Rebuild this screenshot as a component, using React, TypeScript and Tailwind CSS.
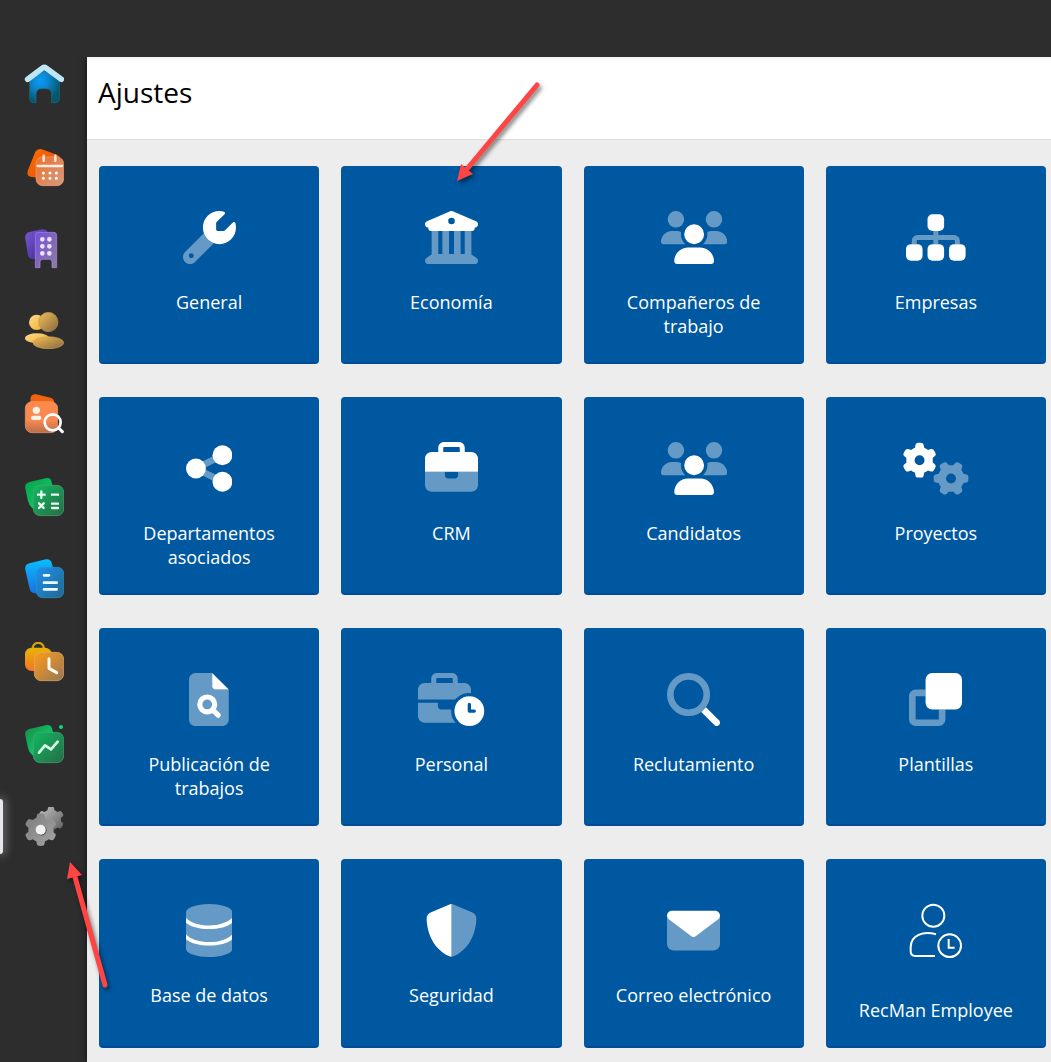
import type { ReactNode } from "react";

const GEAR =
  "M308.5 135.3c7.1-6.3 9.9-16.2 6.2-25c-2.3-5.3-4.8-10.5-7.6-15.5L304 89.4c-3-5-6.3-9.9-9.8-14.6c-5.7-7.6-15.7-10.1-24.7-7.1l-28.2 9.3c-10.7-8.8-23-16-36.2-20.9L199 27.1c-1.9-9.3-9.1-16.7-18.5-17.8C173.9 8.4 167.2 8 160.4 8h-.7c-6.8 0-13.5 .4-20.1 1.2c-9.4 1.1-16.6 8.6-18.5 17.8L115 56.1c-13.3 5-25.5 12.1-36.2 20.9L50.5 67.8c-9-3-19-.5-24.7 7.1c-3.5 4.7-6.8 9.6-9.9 14.6l-3 5.3c-2.8 5-5.3 10.2-7.6 15.6c-3.7 8.7-.9 18.6 6.2 25l22.2 19.8C32.6 161.9 32 168.9 32 176s.6 14.1 1.7 20.9L11.5 216.7c-7.1 6.3-9.9 16.2-6.2 25c2.3 5.3 4.8 10.5 7.6 15.6l3 5.2c3 5.1 6.3 9.9 9.9 14.6c5.7 7.6 15.7 10.1 24.7 7.1l28.2-9.3c10.7 8.8 23 16 36.2 20.9l6.1 29.1c1.9 9.3 9.1 16.7 18.5 17.8c6.7 .8 13.5 1.2 20.4 1.2s13.7-.4 20.4-1.2c9.4-1.1 16.6-8.6 18.5-17.8l6.1-29.1c13.3-5 25.5-12.1 36.2-20.9l28.2 9.3c9 3 19 .5 24.7-7.1c3.5-4.7 6.8-9.5 9.8-14.6l3.1-5.4c2.8-5 5.3-10.2 7.6-15.5c3.7-8.7 .9-18.6-6.2-25l-22.2-19.8c1.1-6.8 1.7-13.8 1.7-20.9s-.6-14.1-1.7-20.9l22.2-19.8z";
const GEAR_HOLE = "M112 176a48 48 0 1 1 96 0 48 48 0 1 1 -96 0z";

/* Two-tone icon, 53px high */
function Duo({ width = 512, children }: { width?: number; children: ReactNode }) {
  return (
    <svg viewBox={`0 0 ${width} 512`} className="h-[53px] w-auto" fill="white" aria-hidden="true">
      {children}
    </svg>
  );
}

const usersIcon = (
  <Duo width={640}>
    <path
      opacity=".4"
      d="M144 0a80 80 0 1 1 0 160A80 80 0 1 1 144 0zM512 0a80 80 0 1 1 0 160A80 80 0 1 1 512 0zM0 298.7C0 239.8 47.8 192 106.7 192h42.7c15.9 0 31 3.5 44.6 9.7c-1.3 7.2-1.9 14.7-1.9 22.3c0 38.2 16.8 72.5 43.3 96H21.3C9.6 320 0 310.4 0 298.7zM405.3 320c26.6-23.5 43.3-57.8 43.3-96c0-7.6-.7-15-1.9-22.3c13.6-6.3 28.7-9.7 44.6-9.7h42.7C592.2 192 640 239.8 640 298.7c0 11.8-9.6 21.3-21.3 21.3H405.3z"
    />
    <path d="M224 224a96 96 0 1 1 192 0 96 96 0 1 1 -192 0zM128 485.3C128 411.7 187.7 352 261.3 352H378.7C452.3 352 512 411.7 512 485.3c0 14.7-11.9 26.7-26.7 26.7H154.7c-14.7 0-26.7-11.9-26.7-26.7z" />
  </Duo>
);

const tiles: { label: string; icon: ReactNode }[] = [
  {
    label: "General",
    icon: (
      <Duo>
        <path
          opacity=".4"
          fillRule="evenodd"
          d="M201.5 214.5L19.9 396.1C7.2 408.8 0 426.1 0 444.1C0 481.6 30.4 512 67.9 512c18 0 35.3-7.2 48-19.9L297.5 310.5A160 160 0 0 1 201.5 214.5zM80 408a24 24 0 1 1 0 48 24 24 0 1 1 0-48z"
        />
        <path d="M352 320c88.4 0 160-71.6 160-160c0-15.3-2.2-30.1-6.2-44.2c-3.1-10.8-16.4-13.2-24.3-5.3l-76.8 76.8c-3 3-7.1 4.7-11.3 4.7H336c-8.8 0-16-7.2-16-16V118.6c0-4.2 1.7-8.3 4.7-11.3l76.8-76.8c7.9-7.9 5.4-21.2-5.3-24.3C382.1 2.2 367.3 0 352 0C263.6 0 192 71.6 192 160s71.6 160 160 160z" />
      </Duo>
    ),
  },
  {
    label: "Economía",
    icon: (
      <Duo>
        <path
          opacity=".4"
          d="M128 192H64V420.3c-.6.3-1.2.7-1.8 1.1l-48 32c-11.7 7.8-17 22.4-12.9 35.9S17.9 512 32 512H480c14.1 0 26.5-9.2 30.6-22.7s-1.1-28.1-12.9-35.9l-48-32c-.6-.4-1.2-.7-1.8-1.1V192H384V416H344V192H280V416H232V192H168V416H128V192z"
        />
        <path
          fillRule="evenodd"
          d="M243.4 2.6l-224 96c-14 6-21.8 21-18.7 35.8S16.8 160 32 160v8c0 13.3 10.7 24 24 24H456c13.3 0 24-10.7 24-24v-8c15.2 0 28.3-10.7 31.3-25.6s-4.8-29.9-18.7-35.8l-224-96c-8-3.4-17.2-3.4-25.2 0zM256 64a32 32 0 1 1 0 64 32 32 0 1 1 0-64z"
        />
      </Duo>
    ),
  },
  { label: "Compañeros de trabajo", icon: usersIcon },
  {
    label: "Empresas",
    icon: (
      <Duo width={576}>
        <path
          opacity=".4"
          fill="none"
          stroke="white"
          strokeWidth="48"
          d="M80 320v-32c0-18 14-32 32-32H464c18 0 32 14 32 32v32M288 192v40M288 280v40"
        />
        <rect x="208" y="32" width="160" height="160" rx="48" />
        <rect x="0" y="320" width="160" height="160" rx="48" />
        <rect x="208" y="320" width="160" height="160" rx="48" />
        <rect x="416" y="320" width="160" height="160" rx="48" />
      </Duo>
    ),
  },
  {
    label: "Departamentos asociados",
    icon: (
      <Duo width={448}>
        <path opacity=".4" fill="none" stroke="white" strokeWidth="64" d="M352 128L96 256l256 128" />
        <circle cx="96" cy="256" r="96" />
        <circle cx="352" cy="128" r="96" />
        <circle cx="352" cy="384" r="96" />
      </Duo>
    ),
  },
  {
    label: "CRM",
    icon: (
      <Duo>
        <path d="M184 48H328c4.4 0 8 3.6 8 8V96H176V56c0-4.4 3.6-8 8-8zm-56 8V96H64C28.7 96 0 124.7 0 160V288H512V160c0-35.3-28.7-64-64-64H384V56c0-30.9-25.1-56-56-56H184c-30.9 0-56 25.1-56 56z" />
        <path
          opacity=".4"
          d="M0 288V416c0 35.3 28.7 64 64 64H448c35.3 0 64-28.7 64-64V288H320v32c0 17.7-14.3 32-32 32H224c-17.7 0-32-14.3-32-32V288z"
        />
      </Duo>
    ),
  },
  { label: "Candidatos", icon: usersIcon },
  {
    label: "Proyectos",
    icon: (
      <Duo width={640}>
        <path fillRule="evenodd" d={GEAR + GEAR_HOLE} />
        <path
          opacity=".4"
          fillRule="evenodd"
          transform="translate(464 352) rotate(90) translate(-160 -176)"
          d={GEAR + GEAR_HOLE}
        />
      </Duo>
    ),
  },
  {
    label: "Publicación de trabajos",
    icon: (
      <Duo width={384}>
        <path
          opacity=".4"
          d="M64 0C28.7 0 0 28.7 0 64V448c0 35.3 28.7 64 64 64H320c35.3 0 64-28.7 64-64V160H256c-17.7 0-32-14.3-32-32V0z"
        />
        <path d="M224 0V128c0 17.7 14.3 32 32 32H384L224 0z" />
        <circle cx="176" cy="304" r="72" fill="none" stroke="white" strokeWidth="50" />
        <path d="M230 358l52 50" stroke="white" strokeWidth="50" strokeLinecap="round" />
      </Duo>
    ),
  },
  {
    label: "Personal",
    icon: (
      <Duo width={640}>
        <path
          opacity=".4"
          d="M184 48H328c4.4 0 8 3.6 8 8V96H176V56c0-4.4 3.6-8 8-8zm-56 8V96H64C28.7 96 0 124.7 0 160V256H512V160c0-35.3-28.7-64-64-64H384V56c0-30.9-25.1-56-56-56H184c-30.9 0-56 25.1-56 56zM0 288V416c0 35.3 28.7 64 64 64H448V352H224c-17.7 0-32-14.3-32-32V288z"
        />
        <circle cx="496" cy="368" r="176" fill="#0058a0" />
        <circle cx="496" cy="368" r="144" />
        <path
          d="M496 304v64h48"
          fill="none"
          stroke="#0058a0"
          strokeWidth="32"
          strokeLinecap="round"
          strokeLinejoin="round"
        />
      </Duo>
    ),
  },
  {
    label: "Reclutamiento",
    icon: (
      <Duo>
        <circle opacity=".4" cx="208" cy="208" r="176" fill="none" stroke="white" strokeWidth="64" />
        <path d="M330.7 376C347 364 364 347 376 330.7L502.6 457.4c12.5 12.5 12.5 32.8 0 45.3s-32.8 12.5-45.3 0z" />
      </Duo>
    ),
  },
  {
    label: "Plantillas",
    icon: (
      <Duo>
        <path
          opacity=".4"
          fill="none"
          stroke="white"
          strokeWidth="64"
          d="M160 192H64a32 32 0 0 0-32 32V448a32 32 0 0 0 32 32H288a32 32 0 0 0 32-32V352"
        />
        <rect x="160" width="352" height="352" rx="64" />
      </Duo>
    ),
  },
  {
    label: "Base de datos",
    icon: (
      <Duo width={448}>
        <path
          opacity=".4"
          d="M448 80v352c0 44.2-100.3 80-224 80S0 476.2 0 432V80C0 35.8 100.3 0 224 0S448 35.8 448 80z"
        />
        <path d="M0 132C39 176 124 208 224 208S409 176 448 132V180C409 216 324 242 224 242S39 216 0 180z" />
        <path d="M0 292C39 336 124 368 224 368S409 336 448 292V340C409 376 324 402 224 402S39 376 0 340z" />
      </Duo>
    ),
  },
  {
    label: "Seguridad",
    icon: (
      <Duo>
        <path d="M256 0c-4.6 0-9.2 1-13.4 2.9L54.3 82.8c-22 9.3-38.4 31-38.3 57.2c.5 99.2 41.3 280.7 213.6 363.2c8.4 4 17.4 6.8 26.4 6.8z" />
        <path
          opacity=".4"
          d="M256 0c4.6 0 9.2 1 13.4 2.9L457.7 82.8c22 9.3 38.4 31 38.3 57.2c-.5 99.2-41.3 280.7-213.6 363.2c-8.4 4-17.4 6.8-26.4 6.8z"
        />
      </Duo>
    ),
  },
  {
    label: "Correo electrónico",
    icon: (
      <Duo>
        <path
          opacity=".4"
          d="M0 112V384c0 35.3 28.7 64 64 64H448c35.3 0 64-28.7 64-64V112c0 15.1-7.1 29.3-19.2 38.4L275.2 313.6c-11.4 8.5-27 8.5-38.4 0L19.2 150.4C7.1 141.3 0 127.1 0 112z"
        />
        <path d="M48 64C21.5 64 0 85.5 0 112c0 15.1 7.1 29.3 19.2 38.4L236.8 313.6c11.4 8.5 27 8.5 38.4 0L492.8 150.4c12.1-9.1 19.2-23.3 19.2-38.4c0-26.5-21.5-48-48-48H48z" />
      </Duo>
    ),
  },
  {
    label: "RecMan Employee",
    icon: (
      <svg
        viewBox="0 0 180 204"
        className="h-[68px] w-[60px] overflow-visible"
        fill="none"
        stroke="white"
        strokeWidth="6"
        aria-hidden="true"
      >
        <circle cx="82" cy="35" r="33" />
        <path d="M90 91C52 81 14 92 14 130V142C14 151 19 156 28 156H87" />
        <circle cx="131" cy="125" r="34" />
        <path d="M128 105V131H146" />
      </svg>
    ),
  },
];

function Gradient({ id, from, to }: { id: string; from: string; to: string }) {
  return (
    <linearGradient id={id} x1="0" y1="0" x2="1" y2="1">
      <stop stopColor={from} />
      <stop offset="1" stopColor={to} />
    </linearGradient>
  );
}

const navItems: { label: string; icon: ReactNode }[] = [
  {
    label: "Inicio",
    icon: (
      <>
        <radialGradient id="home" cx=".35" cy=".3" r=".7">
          <stop stopColor="#0a9bf5" />
          <stop offset=".4" stopColor="#0c86cf" />
          <stop offset="1" stopColor="#05566a" />
        </radialGradient>
        <path
          d="M17 44L61 20L106 44V103q0 13-13 13H83V91Q83 74 66 74H54Q36 74 36 91V116H29Q17 116 17 103z"
          fill="url(#home)"
          stroke="#14718c"
          strokeWidth="2"
        />
        <path
          d="M11 46L56 12Q61 8 66 12L112 46"
          fill="none"
          stroke="#bfe6f5"
          strokeWidth="17"
          strokeLinecap="round"
          strokeLinejoin="round"
        />
      </>
    ),
  },
  {
    label: "Calendario",
    icon: (
      <>
        <Gradient id="cal-a" from="#ff6a00" to="#e2540c" />
        <Gradient id="cal-b" from="#f0702a" to="#d49a80" />
        <path d="M34 14Q41 3 53 7L99 23Q112 29 108 41L92 80Q86 96 72 94L22 90Q7 88 11 72z" fill="url(#cal-a)" />
        <rect x="36" y="30" width="83" height="86" rx="20" fill="url(#cal-b)" stroke="#f3a076" strokeWidth="2" />
        <path d="M59 26V42M94 26V42M41 57H114" stroke="#fff0e6" strokeWidth="7" strokeLinecap="round" />
        <path d="M58 78h.1M78 78h.1M97 78h.1M58 94h.1M78 94h.1M97 94h.1" stroke="white" strokeWidth="9" strokeLinecap="round" />
      </>
    ),
  },
  {
    label: "Empresas",
    icon: (
      <>
        <Gradient id="build-a" from="#7b58d0" to="#3d2596" />
        <Gradient id="build-b" from="#7350dc" to="#8d7d9f" />
        <path d="M16 9L54 1Q66-1 72 10L60 85L28 90Q15 91 12 79L4 30Q1 14 16 9z" fill="url(#build-a)" />
        <path
          d="M34 116V19Q34 10 43 10H89Q98 10 98 19V116H84V99Q84 91 76 91H56Q48 91 48 99V116z"
          fill="url(#build-b)"
          stroke="#a78be0"
          strokeWidth="2"
        />
        <path d="M55 31h.1M76 31h.1M55 52h.1M76 52h.1M55 73h.1M76 73h.1" stroke="#f0e2ff" strokeWidth="14" strokeLinecap="round" />
      </>
    ),
  },
  {
    label: "Candidatos",
    icon: (
      <>
        <Gradient id="ppl-a" from="#fbdc90" to="#f5ad24" />
        <Gradient id="ppl-b" from="#f6bd55" to="#84693f" />
        <circle cx="38" cy="31" r="23" fill="url(#ppl-a)" />
        <ellipse cx="39" cy="79" rx="36" ry="15" fill="url(#ppl-a)" />
        <circle cx="73" cy="30" r="29" fill="url(#ppl-b)" stroke="#b69456" strokeWidth="2" />
        <ellipse cx="73" cy="92" rx="46" ry="18" fill="url(#ppl-b)" stroke="#c9a65e" strokeWidth="2" />
      </>
    ),
  },
  {
    label: "Reclutamiento",
    icon: (
      <>
        <linearGradient id="rec-b" x1="0" y1="0" x2="0" y2="1">
          <stop stopColor="#fc8a4b" />
          <stop offset=".6" stopColor="#f98a50" />
          <stop offset="1" stopColor="#b86d49" />
        </linearGradient>
        <path d="M20 10Q24-1 36 1L80 11Q90 14 90 24V50H18z" fill="#f26210" />
        <rect x="4" y="23" width="97" height="93" rx="20" fill="url(#rec-b)" stroke="#ef9c70" strokeWidth="2" />
        <circle cx="37" cy="49" r="11" fill="#fff0e8" />
        <rect x="21" y="65" width="31" height="13" rx="6" fill="#fff0e8" />
        <circle cx="86" cy="85" r="24" fill="none" stroke="white" strokeWidth="8" />
        <path d="M104 102L115 113" stroke="white" strokeWidth="9" strokeLinecap="round" />
      </>
    ),
  },
  {
    label: "Economía",
    icon: (
      <>
        <Gradient id="calc-a" from="#07a14b" to="#10d86e" />
        <Gradient id="calc-b" from="#12b862" to="#286b45" />
        <path d="M16 15L68 3Q79 1 82 12L96 70L50 96L25 94Q15 85 12 72L4 34Q1 19 16 15z" fill="url(#calc-a)" />
        <rect x="28" y="25" width="91" height="91" rx="20" fill="url(#calc-b)" stroke="#48a777" strokeWidth="2" />
        <path
          d="M52 43V63M42 53H62M84 53H102M45 79L59 93M59 79L45 93M84 80H102M84 93H102"
          stroke="#e9fff1"
          strokeWidth="7"
          strokeLinecap="round"
        />
      </>
    ),
  },
  {
    label: "Documentos",
    icon: (
      <>
        <linearGradient id="doc-a" x1="0" y1="0" x2="0" y2="1">
          <stop stopColor="#09bdff" />
          <stop offset="1" stopColor="#1b6fe0" />
        </linearGradient>
        <Gradient id="doc-b" from="#1c8ff0" to="#24698c" />
        <path d="M16 13L66 1Q79-1 83 12L98 66L80 96L34 103Q21 103 17 90L4 33Q1 17 16 13z" fill="url(#doc-a)" />
        <rect x="37" y="25" width="82" height="91" rx="18" fill="url(#doc-b)" stroke="#2997c5" strokeWidth="2" />
        <path d="M60 49H75M60 71H98M60 91H98" stroke="#eefaff" strokeWidth="8" strokeLinecap="round" />
      </>
    ),
  },
  {
    label: "Personal",
    icon: (
      <>
        <linearGradient id="bag-a" x1="0" y1="0" x2="0" y2="1">
          <stop stopColor="#e9b400" />
          <stop offset="1" stopColor="#f4742b" />
        </linearGradient>
        <Gradient id="bag-b" from="#ff9c16" to="#96775a" />
        <path d="M26 22C24-4 61-4 60 22" fill="none" stroke="#d3a010" strokeWidth="7" />
        <rect x="3" y="17" width="80" height="70" rx="20" fill="url(#bag-a)" />
        <rect x="31" y="31" width="88" height="85" rx="20" fill="url(#bag-b)" stroke="#e2ad6c" strokeWidth="2" />
        <path d="M75 50V79L98 92" fill="none" stroke="#fffaf0" strokeWidth="9" strokeLinecap="round" strokeLinejoin="round" />
      </>
    ),
  },
  {
    label: "Informes",
    icon: (
      <>
        <Gradient id="rep-a" from="#1a8a45" to="#07ec7d" />
        <Gradient id="rep-b" from="#12b862" to="#286b45" />
        <path d="M16 15L68 3Q79 1 84 12L96 70L50 96L25 94Q15 85 12 72L4 34Q1 19 16 15z" fill="url(#rep-a)" />
        <rect x="28" y="25" width="91" height="91" rx="20" fill="url(#rep-b)" stroke="#48a777" strokeWidth="2" />
        <path d="M45 86L63 64L81 76L101 53" fill="none" stroke="#d8ffe8" strokeWidth="8" strokeLinecap="round" strokeLinejoin="round" />
        <circle cx="111" cy="9" r="6" fill="#08dd78" />
      </>
    ),
  },
  {
    label: "Ajustes",
    icon: (
      <>
        <Gradient id="set-a" from="#c4c4c4" to="#5a5a5a" />
        <Gradient id="set-b" from="#7c7c7c" to="#a5a5a5" />
        <path transform="translate(81 38) scale(.235) translate(-160 -176)" d={GEAR} fill="url(#set-a)" />
        <path transform="translate(50 68) scale(.29) translate(-160 -176)" d={GEAR} fill="url(#set-b)" />
        <circle cx="52" cy="70" r="16" fill="#5d5d5d" />
        <circle cx="50" cy="68" r="15" fill="#f2f2f2" />
      </>
    ),
  },
];

function Sidebar() {
  return (
    <nav className="w-[87px] shrink-0 pt-[7px]">
      <ul>
        {navItems.map((item) => (
          <li key={item.label} className="relative odd:mb-[43px] even:mb-[42px]">
            {item.label === "Ajustes" && (
              <span className="absolute -top-2 left-0 h-[55px] w-[3px] rounded-r-sm bg-gray-200 shadow-[0_0_10px_2px_rgba(255,255,255,0.35)]" />
            )}
            <a href="#" aria-label={item.label} className="ml-6 block size-10">
              <svg viewBox="0 0 120 120" className="size-10" aria-hidden="true">
                {item.icon}
              </svg>
            </a>
          </li>
        ))}
      </ul>
    </nav>
  );
}

/* Red pointers drawn over the page */
function Arrows() {
  return (
    <svg
      className="pointer-events-none absolute inset-0 z-20 size-full drop-shadow-[2px_3px_2px_rgba(0,0,0,0.5)]"
      fill="#ff4444"
      stroke="#ff4444"
      aria-hidden="true"
    >
      <path d="M537 85L467 169" strokeWidth="5" strokeLinecap="round" />
      <path d="M457 181L461 164L473 174z" stroke="none" />
      <path d="M105 985L75 877" strokeWidth="5" strokeLinecap="round" />
      <path d="M70 862L67 879L82 875z" stroke="none" />
    </svg>
  );
}

export default function App() {
  return (
    <div className="relative flex min-h-screen flex-col overflow-hidden bg-[#2d2d2d] font-['Open_Sans',sans-serif]">
      <header className="relative z-10 h-[57px] bg-[#2d2d2d]" />

      <div className="flex flex-1">
        <Sidebar />

        <main className="min-w-0 flex-1 bg-[#ededed] shadow-[0_0_6px_rgba(0,0,0,0.6)]">
          <div className="border-b border-[#dcdcdc] bg-white bg-linear-to-b from-[#f0f0f0] to-white to-5% px-[11px] pt-[15px] pb-[27px]">
            <h1 className="text-[28px] leading-10 font-normal text-black">Ajustes</h1>
          </div>

          <div className="grid grid-cols-4 gap-x-[22px] gap-y-[33px] pt-[26px] pr-[5px] pb-[13px] pl-3">
            {tiles.map((tile) => (
              <a
                key={tile.label}
                href="#"
                className="flex flex-col items-center rounded border-b-2 border-[#004c99] bg-[#0058a0] px-6 pt-[45px] pb-6 text-center text-white"
              >
                {tile.icon}
                <span className="mt-[26px] text-lg leading-6">{tile.label}</span>
              </a>
            ))}
          </div>
        </main>
      </div>

      <Arrows />
    </div>
  );
}
